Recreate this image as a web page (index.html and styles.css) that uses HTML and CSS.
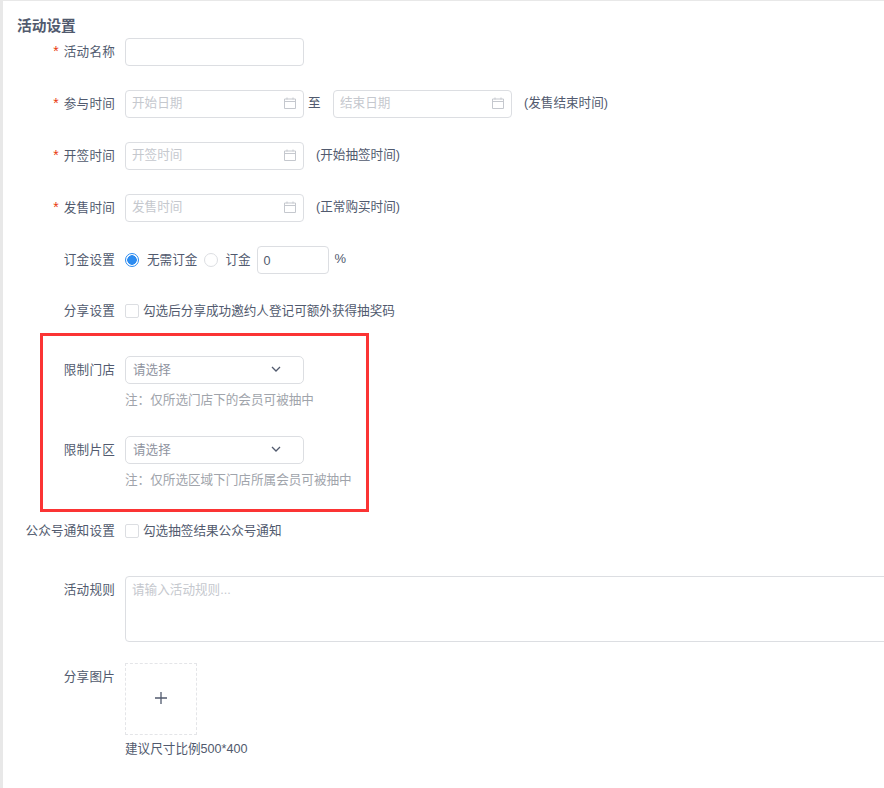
FILE: index.html
```html
<!DOCTYPE html>
<html lang="zh-CN">
<head>
    <meta charset="UTF-8">
    <title>活动设置</title>
    <link rel="stylesheet" href="styles.css">
</head>
<body>
    <svg class="svg-defs" width="0" height="0">
        <symbol id="cal" viewBox="0 0 12 12">
            <path d="M.5 2h11v9.500h-11zM.5 4.500h11M3 .5v2M9 .5v2" fill="none" stroke="currentColor"/>
        </symbol>
        <symbol id="chev" viewBox="0 0 10 6">
            <path d="M1 1l4 4 4-4" fill="none" stroke="currentColor" stroke-width="1.300"/>
        </symbol>
    </svg>
    <div class="page">
        <h3 class="title">活动设置</h3>

        <div class="row row-name">
            <label class="lbl req">活动名称</label>
            <div class="input"></div>
        </div>

        <div class="row">
            <label class="lbl req">参与时间</label>
            <div class="input ph">开始日期<svg class="cal"><use href="#cal"/></svg></div>
            <span class="to">至</span>
            <div class="input ph">结束日期<svg class="cal"><use href="#cal"/></svg></div>
            <span class="tip tip-end">(发售结束时间)</span>
        </div>

        <div class="row">
            <label class="lbl req">开签时间</label>
            <div class="input ph">开签时间<svg class="cal"><use href="#cal"/></svg></div>
            <span class="tip">(开始抽签时间)</span>
        </div>

        <div class="row">
            <label class="lbl req">发售时间</label>
            <div class="input ph">发售时间<svg class="cal"><use href="#cal"/></svg></div>
            <span class="tip">(正常购买时间)</span>
        </div>

        <div class="row">
            <label class="lbl">订金设置</label>
            <span class="radio on"></span>
            <span class="radio-text">无需订金</span>
            <span class="radio"></span>
            <span class="radio-text">订金</span>
            <div class="input small">0</div>
            <span class="pct">%</span>
        </div>

        <div class="row row-share">
            <label class="lbl">分享设置</label>
            <span class="check"></span>
            <span>勾选后分享成功邀约人登记可额外获得抽奖码</span>
        </div>

        <div class="row row-limit">
            <label class="lbl">限制门店</label>
            <div class="input select">请选择<svg class="chev"><use href="#chev"/></svg></div>
        </div>
        <p class="note">注：仅所选门店下的会员可被抽中</p>

        <div class="row row-limit">
            <label class="lbl">限制片区</label>
            <div class="input select">请选择<svg class="chev"><use href="#chev"/></svg></div>
        </div>
        <p class="note">注：仅所选区域下门店所属会员可被抽中</p>

        <div class="row row-notify">
            <label class="lbl">公众号通知设置</label>
            <span class="check"></span>
            <span>勾选抽签结果公众号通知</span>
        </div>

        <div class="row row-top row-rule">
            <label class="lbl lbl-rule">活动规则</label>
            <div class="area">请输入活动规则...</div>
        </div>

        <div class="row row-top row-pic">
            <label class="lbl lbl-pic">分享图片</label>
            <div class="upload">
                <svg width="12" height="12" viewBox="0 0 12 12"><path d="M6 0v12M0 6h12" fill="none" stroke="#515a6e" stroke-width="1.300"/></svg>
            </div>
        </div>
        <p class="size-tip">建议尺寸比例500*400</p>

        <div class="mark"></div>
    </div>
</body>
</html>
```

FILE: styles.css
```css
* {
    margin: 0;
    padding: 0;
    box-sizing: border-box;
}
html, body {
    height: 100%;
    overflow: hidden;
}
body {
    background: #e8e8e8;
    font-family: "Liberation Sans", "Noto Sans CJK SC", sans-serif;
    font-size: 12.6px;
    color: #515a6e;
}
.svg-defs {
    position: absolute;
}
.page {
    position: relative;
    height: 100%;
    margin: 1px 0 0 3px;
    padding-left: 14px;
    background: #fff;
}
.title {
    height: 37px;
    padding-top: 15px;
    font-size: 14.7px;
    line-height: 20px;
    font-weight: bold;
}
.row {
    display: flex;
    align-items: center;
    height: 28px;
    margin-bottom: 24px;
    line-height: 25px;
}
.row-share {
    margin-top: -1px;
    margin-bottom: 31px;
}
.row-limit {
    margin-bottom: 6px;
}
.row-notify {
    margin-top: 1px;
    margin-bottom: 31px;
}
.row-top {
    align-items: flex-start;
}
.row-rule {
    height: 66px;
    margin-bottom: 21px;
}
.row-pic {
    height: 72px;
    margin-bottom: 0;
}
.lbl {
    flex: none;
    width: 98px;
    margin-right: 10px;
    letter-spacing: .2px;
    text-align: right;
}
.lbl-rule {
    padding-top: 2px;
}
.lbl-pic {
    padding-top: 2px;
}
.req::before {
    content: "*";
    margin-right: 5px;
    font-size: 14px;
    color: #e8380d;
}
.input {
    position: relative;
    flex: none;
    width: 179px;
    height: 28px;
    padding-left: 6px;
    border: 1px solid #dcdee2;
    border-radius: 4px;
    background: #fff;
}
.ph {
    color: #c5c8ce;
}
.cal {
    position: absolute;
    top: 6px;
    right: 7px;
    width: 12px;
    height: 12px;
    color: #c5c8ce;
}
.to {
    width: 14px;
    margin: 0 11px 2px 4px;
}
.tip {
    margin-left: 12px;
    margin-bottom: 2px;
}
.radio {
    flex: none;
    width: 14px;
    height: 14px;
    border: 1px solid #dcdee2;
    border-radius: 50%;
    background: #fff;
}
.radio.on {
    border-color: #2d8cf0;
    background: radial-gradient(circle, #2d8cf0 0 4.500px, #fff 5px);
}
.radio-text {
    margin: 0 6px 0 8px;
}
.radio-text + .radio {
    margin-left: 1px;
}
.radio-text + .radio + .radio-text {
    margin-left: 7px;
}
.small {
    width: 72px;
    line-height: 28px;
    color: #515a6e;
}
.pct {
    margin: 0 0 3px 6px;
    font-size: 13px;
}
.check {
    flex: none;
    width: 14px;
    height: 14px;
    margin-right: 4px;
    border: 1px solid #dcdee2;
    border-radius: 2px;
    background: #fff;
}
.select {
    padding-left: 7px;
    line-height: 26px;
    border-radius: 5px;
    color: #8f949f;
}
.chev {
    position: absolute;
    top: 9px;
    right: 22px;
    width: 10px;
    height: 6px;
    color: #515a6e;
}
.note {
    height: 46px;
    padding-left: 108px;
    line-height: 20px;
    color: #a0a4ab;
}
.area {
    flex: 1;
    height: 66px;
    margin-right: -6px;
    padding: 1px 6px 0;
    border: 1px solid #dcdee2;
    border-radius: 4px;
    color: #c5c8ce;
}
.upload {
    display: flex;
    align-items: center;
    justify-content: center;
    width: 72px;
    height: 72px;
    padding-bottom: 2px;
    border: 1px dashed #e4e5e8;
}
.size-tip {
    padding: 4px 0 0 108px;
    line-height: 20px;
}
.mark {
    position: absolute;
    left: 37px;
    top: 332px;
    width: 329px;
    height: 179px;
    border: 3px solid #fb3434;
}
```
